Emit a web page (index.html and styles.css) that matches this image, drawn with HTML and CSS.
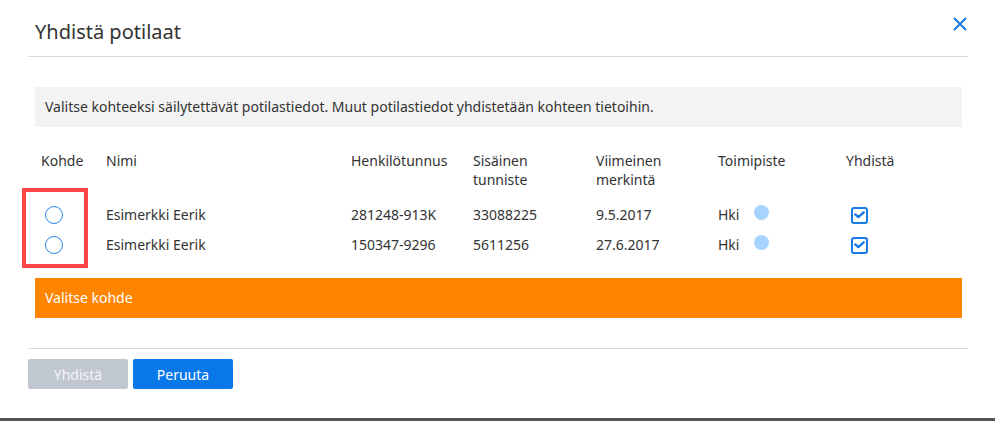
FILE: index.html
```html
<!DOCTYPE html>
<html lang="fi">
<head>
    <meta charset="UTF-8">
    <meta name="viewport" content="width=device-width, initial-scale=1.0">
    <title>Yhdistä potilaat</title>
    <link rel="stylesheet" href="styles.css">
</head>
<body>
    <div class="modal">
        <div class="dialog">
            <div class="dialog-header">
                <h1>Yhdistä potilaat</h1>
                <button class="close-btn" aria-label="Sulje">
                    <svg width="14" height="14" viewBox="0 0 14 14">
                        <path d="M1 1 L13 13 M13 1 L1 13" stroke="#1a7be6" stroke-width="2" fill="none"/>
                    </svg>
                </button>
            </div>

            <div class="dialog-body">
                <div class="info-box">Valitse kohteeksi säilytettävät potilastiedot. Muut potilastiedot yhdistetään kohteen tietoihin.</div>

                <div class="table-wrap">
                    <table class="patients">
                        <colgroup>
                            <col style="width: 65px">
                            <col style="width: 245px">
                            <col style="width: 122px">
                            <col style="width: 123px">
                            <col style="width: 122px">
                            <col style="width: 128px">
                            <col>
                        </colgroup>
                        <thead>
                            <tr>
                                <th>Kohde</th>
                                <th>Nimi</th>
                                <th>Henkilötunnus</th>
                                <th>Sisäinen<br>tunniste</th>
                                <th>Viimeinen<br>merkintä</th>
                                <th>Toimipiste</th>
                                <th>Yhdistä</th>
                            </tr>
                        </thead>
                        <tbody>
                            <tr>
                                <td><span class="radio"></span></td>
                                <td>Esimerkki Eerik</td>
                                <td>281248-913K</td>
                                <td>33088225</td>
                                <td>9.5.2017</td>
                                <td><span class="office">Hki <span class="dot"></span></span></td>
                                <td><span class="check"><svg width="11" height="8" viewBox="0 0 11 8"><path d="M1.3 3.4 L4.3 6.2 L9.7 1.3" stroke="#1a7be6" stroke-width="2.4" fill="none" stroke-linecap="round" stroke-linejoin="round"/></svg></span></td>
                            </tr>
                            <tr>
                                <td><span class="radio"></span></td>
                                <td>Esimerkki Eerik</td>
                                <td>150347-9296</td>
                                <td>5611256</td>
                                <td>27.6.2017</td>
                                <td><span class="office">Hki <span class="dot"></span></span></td>
                                <td><span class="check"><svg width="11" height="8" viewBox="0 0 11 8"><path d="M1.3 3.4 L4.3 6.2 L9.7 1.3" stroke="#1a7be6" stroke-width="2.4" fill="none" stroke-linecap="round" stroke-linejoin="round"/></svg></span></td>
                            </tr>
                        </tbody>
                    </table>
                    <div class="highlight"></div>
                </div>

                <div class="alert">Valitse kohde</div>
            </div>

            <div class="dialog-footer">
                <button class="btn btn-disabled" disabled>Yhdistä</button>
                <button class="btn btn-primary">Peruuta</button>
            </div>
        </div>
    </div>
</body>
</html>
```

FILE: styles.css
```css
body {
    margin: 0;
    background: #fff;
    font-family: "Noto Sans", "Open Sans", sans-serif;
    font-size: 14px;
    color: #333;
}

.modal {
    border-bottom: 3px solid #555;
}

.dialog {
    width: 940px;
    margin-left: 28px;
}

.dialog-header {
    display: flex;
    justify-content: space-between;
    align-items: flex-start;
    height: 56px;
    border-bottom: 1px solid #d5dbe1;
}

.dialog-header h1 {
    margin: 18px 0 0 7px;
    font-size: 20px;
    font-weight: normal;
    line-height: 28px;
    color: #333;
}

.close-btn {
    margin: 17px 1px 0 0;
    padding: 0;
    border: none;
    background: none;
    width: 14px;
    height: 14px;
    cursor: pointer;
    display: flex;
}

.dialog-body {
    padding: 30px 6px 30px 7px;
}

.info-box {
    height: 40px;
    line-height: 40px;
    padding-left: 10px;
    background: #f3f3f3;
}

.table-wrap {
    position: relative;
    margin-top: 24px;
}

.patients {
    width: 100%;
    table-layout: fixed;
    border-collapse: collapse;
}

.patients th {
    text-align: left;
    font-weight: normal;
    vertical-align: top;
    line-height: 19px;
    padding: 0 6px 10px;
    height: 38px;
}

.patients td {
    height: 30px;
    padding: 0 6px;
    vertical-align: middle;
    white-space: nowrap;
}

.radio {
    display: block;
    width: 18px;
    height: 18px;
    margin: 1px 0 0 4px;
    box-sizing: border-box;
    border: 1px solid #2b86ea;
    border-radius: 50%;
}

.office {
    display: flex;
    align-items: center;
    gap: 15px;
}

.dot {
    width: 15px;
    height: 15px;
    border-radius: 50%;
    background: #a6d3ff;
    margin-top: -3px;
}

.check {
    display: flex;
    align-items: center;
    justify-content: center;
    width: 17px;
    height: 17px;
    margin: 2px 0 0 5px;
    box-sizing: border-box;
    border: 2px solid #1a7be6;
    border-radius: 3px;
}

/* red marker around the target column */
.highlight {
    position: absolute;
    left: -13px;
    top: 37px;
    width: 66px;
    height: 80px;
    box-sizing: border-box;
    border: 4px solid #fb4646;
}

.alert {
    margin-top: 19px;
    height: 40px;
    line-height: 40px;
    padding-left: 10px;
    background: #ff8400;
    color: #fff;
}

.dialog-footer {
    display: flex;
    gap: 5px;
    padding: 10px 0 29px;
    border-top: 1px solid #d5dbe1;
}

.btn {
    width: 100px;
    height: 30px;
    border: none;
    border-radius: 2px;
    font-family: inherit;
    font-size: 14px;
    color: #fff;
    cursor: pointer;
}

.btn-disabled {
    background: #c0c7d0;
    color: #f4f5f7;
    cursor: default;
}

.btn-primary {
    background: #0877e8;
}
```
